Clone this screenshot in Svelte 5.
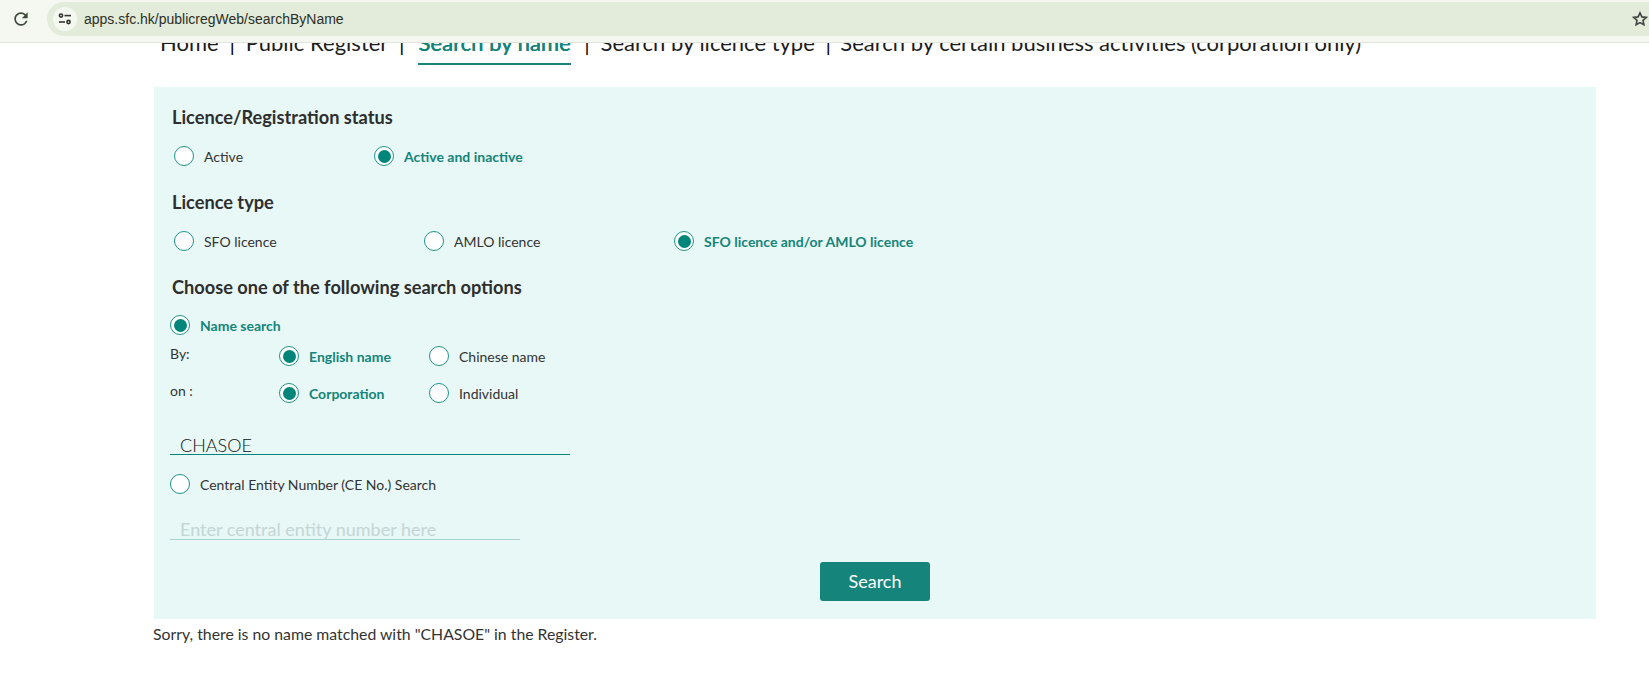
<script>
  const nav = [
    { label: 'Home' },
    { label: 'Public Register' },
    { label: 'Search by name', active: true },
    { label: 'Search by licence type' },
    { label: 'Search by certain business activities (corporation only)' }
  ];
</script>

<div class="chrome">
  <svg class="reload" width="20" height="20" viewBox="0 0 24 24" fill="#3f4a3c">
    <path d="M17.65 6.35A7.958 7.958 0 0 0 12 4c-4.42 0-7.99 3.58-7.99 8s3.57 8 7.99 8c3.73 0 6.84-2.55 7.73-6h-2.08A5.99 5.99 0 0 1 12 18c-3.31 0-6-2.69-6-6s2.69-6 6-6c1.66 0 3.14.69 4.22 1.78L13 11h7V4l-2.35 2.35z" />
  </svg>
  <div class="omnibox">
    <span class="tune">
      <svg width="14" height="12" viewBox="0 0 14 12" fill="none" stroke="#333" stroke-width="1.6">
        <circle cx="3" cy="2.6" r="1.6" />
        <path d="M6.5 2.6h6.5" />
        <path d="M1 9h6" />
        <circle cx="10.5" cy="9" r="1.6" />
      </svg>
    </span>
    <span class="url">apps.sfc.hk/publicregWeb/searchByName</span>
    <svg class="star" width="16" height="16" viewBox="0 0 16 16" fill="none" stroke="#444" stroke-width="1.6">
      <path d="M8 1.8l1.9 4.1 4.4.5-3.3 3 .9 4.4L8 11.6l-3.9 2.2.9-4.4-3.3-3 4.4-.5z" />
    </svg>
  </div>
</div>

<nav class="nav">
  {#each nav as item, i}
    {#if i > 0}<span class="sep">|</span>{/if}
    <a class="nav-link" class:active={item.active} href="#top">{item.label}</a>
  {/each}
</nav>

<main class="page">
  <form class="panel">
    <h3 class="first">Licence/Registration status</h3>
    <div class="row status">
      <label class="opt"><input type="radio" name="status" /><span>Active</span></label>
      <label class="opt on"><input type="radio" name="status" checked /><span>Active and inactive</span></label>
    </div>

    <h3 class="later">Licence type</h3>
    <div class="row licence">
      <label class="opt"><input type="radio" name="lic" /><span>SFO licence</span></label>
      <label class="opt"><input type="radio" name="lic" /><span>AMLO licence</span></label>
      <label class="opt on"><input type="radio" name="lic" checked /><span>SFO licence and/or AMLO licence</span></label>
    </div>

    <h3 class="later">Choose one of the following search options</h3>
    <div class="row mode name-mode">
      <label class="opt on"><input type="radio" name="mode" checked /><span>Name search</span></label>
    </div>
    <div class="row sub by">
      <span class="caption">By:</span>
      <label class="opt on"><input type="radio" name="lang" checked /><span>English name</span></label>
      <label class="opt"><input type="radio" name="lang" /><span>Chinese name</span></label>
    </div>
    <div class="row sub onrow">
      <span class="caption">on :</span>
      <label class="opt on"><input type="radio" name="kind" checked /><span>Corporation</span></label>
      <label class="opt"><input type="radio" name="kind" /><span>Individual</span></label>
    </div>
    <input class="text name" type="text" value="CHASOE" />

    <div class="row mode ce">
      <label class="opt"><input type="radio" name="mode" /><span>Central Entity Number (CE No.) Search</span></label>
    </div>
    <input class="text number" type="text" placeholder="Enter central entity number here" />

    <div class="actions"><button type="button">Search</button></div>
  </form>
  <p class="msg">Sorry, there is no name matched with "CHASOE" in the Register.</p>
</main>

<style>
  :global(body) {
    margin: 0;
    background: #fff;
    font-family: Lato, "Liberation Sans", sans-serif;
    color: #333;
    overflow: hidden;
  }

  .chrome {
    position: relative;
    z-index: 2;
    box-sizing: border-box;
    height: 43px;
    padding: 2px 0 6px 11px;
    display: flex;
    align-items: stretch;
    background: #f5f8f0;
    border-bottom: 1px solid #e1e4da;
  }
  .reload {
    align-self: center;
    margin-right: 16px;
  }
  .omnibox {
    flex: 1;
    display: flex;
    align-items: center;
    padding-left: 6px;
    background: #e3ebda;
    border-radius: 17px 0 0 17px;
    font-family: "Liberation Sans", sans-serif;
    font-size: 14px;
    color: #2b2f28;
  }
  .tune {
    width: 24px;
    height: 24px;
    margin-right: 7px;
    display: flex;
    align-items: center;
    justify-content: center;
    border-radius: 50%;
    background: #f5f8f0;
  }
  .url {
    flex: 1;
  }
  .star {
    margin-right: 1px;
  }

  .nav {
    box-sizing: border-box;
    height: 34px;
    margin-top: -12px;
    padding-left: 160px;
    display: flex;
    align-items: flex-start;
    font-size: 22px;
    line-height: 24px;
    color: #222;
    white-space: nowrap;
  }
  .nav-link {
    color: #1c1c1c;
    text-decoration: none;
  }
  .nav-link:last-child {
    margin-left: -1.5px;
  }
  .nav-link.active {
    box-sizing: border-box;
    height: 34px;
    margin: 0 3px;
    color: #15847a;
    font-weight: 500;
    text-shadow: 0.3px 0 0 #15847a;
    border-bottom: 2px solid #15847a;
  }
  .sep {
    width: 27px;
    text-align: center;
    color: #111;
  }

  .page {
    padding: 22px 53px 0 154px;
  }
  .panel {
    box-sizing: border-box;
    height: 532px;
    padding: 18px 19px 0 16px;
    background: #e7f8f6;
  }
  h3 {
    margin: 0 0 0 2px;
    height: 24px;
    font-size: 18.2px;
    font-weight: 700;
    line-height: 24px;
    color: #2e2e2e;
  }
  h3.later {
    margin-top: 19px;
  }
  .row {
    display: flex;
    align-items: center;
    height: 30px;
    margin-top: 12px;
  }
  .name-mode {
    margin-top: 11px;
  }
  .status .opt {
    width: 196px;
    padding-left: 4px;
  }
  .licence .opt {
    padding-left: 4px;
  }
  .licence .opt:nth-child(1) {
    width: 246px;
  }
  .licence .opt:nth-child(2) {
    width: 246px;
  }
  .sub {
    margin-top: 1px;
  }
  .onrow {
    margin-top: 7px;
  }
  .caption {
    width: 109px;
    font-size: 14px;
    margin-top: -5px;
    color: #333;
  }
  .sub .opt {
    width: 150px;
  }
  .opt {
    display: flex;
    align-items: center;
    font-size: 14px;
    color: #333;
  }
  .opt.on {
    color: #15847a;
    font-weight: 700;
  }
  input[type="radio"] {
    appearance: none;
    position: relative;
    flex: none;
    box-sizing: border-box;
    width: 20px;
    height: 20px;
    margin: 0 10px 0 0;
    border: 1.8px solid #1f9489;
    border-radius: 50%;
    background: #fff;
  }
  input[type="radio"]:checked::before {
    content: "";
    position: absolute;
    inset: 2.5px;
    border-radius: 50%;
    background: #00857a;
  }
  .text {
    display: block;
    box-sizing: border-box;
    height: 30px;
    margin: 0;
    padding: 10px 10px 0;
    border: 0;
    border-bottom: 1px solid #00857a;
    background: transparent;
    font-family: Lato, sans-serif;
    font-size: 18px;
    font-weight: 300;
    color: #111;
    outline: none;
  }
  .name {
    width: 400px;
    margin-top: 17px;
  }
  .ce {
    margin-top: 14px;
  }
  .number {
    width: 350px;
    margin-top: 11px;
    padding-top: 8px;
    border-bottom-color: #a9d3d0;
  }
  .number::placeholder {
    color: #c4d6d5;
    font-weight: 400;
    opacity: 1;
  }
  .actions {
    display: flex;
    justify-content: center;
    margin-top: 22px;
    padding-left: 3px;
  }
  button {
    width: 110px;
    height: 39px;
    padding: 0 0 2px;
    border: 0;
    border-radius: 3px;
    background: #15847a;
    color: #fff;
    font-family: Lato, sans-serif;
    font-size: 18px;
  }
  .msg {
    margin: 5px 0 0 -1px;
    font-size: 15.8px;
    line-height: 20px;
    color: #333;
  }
</style>
